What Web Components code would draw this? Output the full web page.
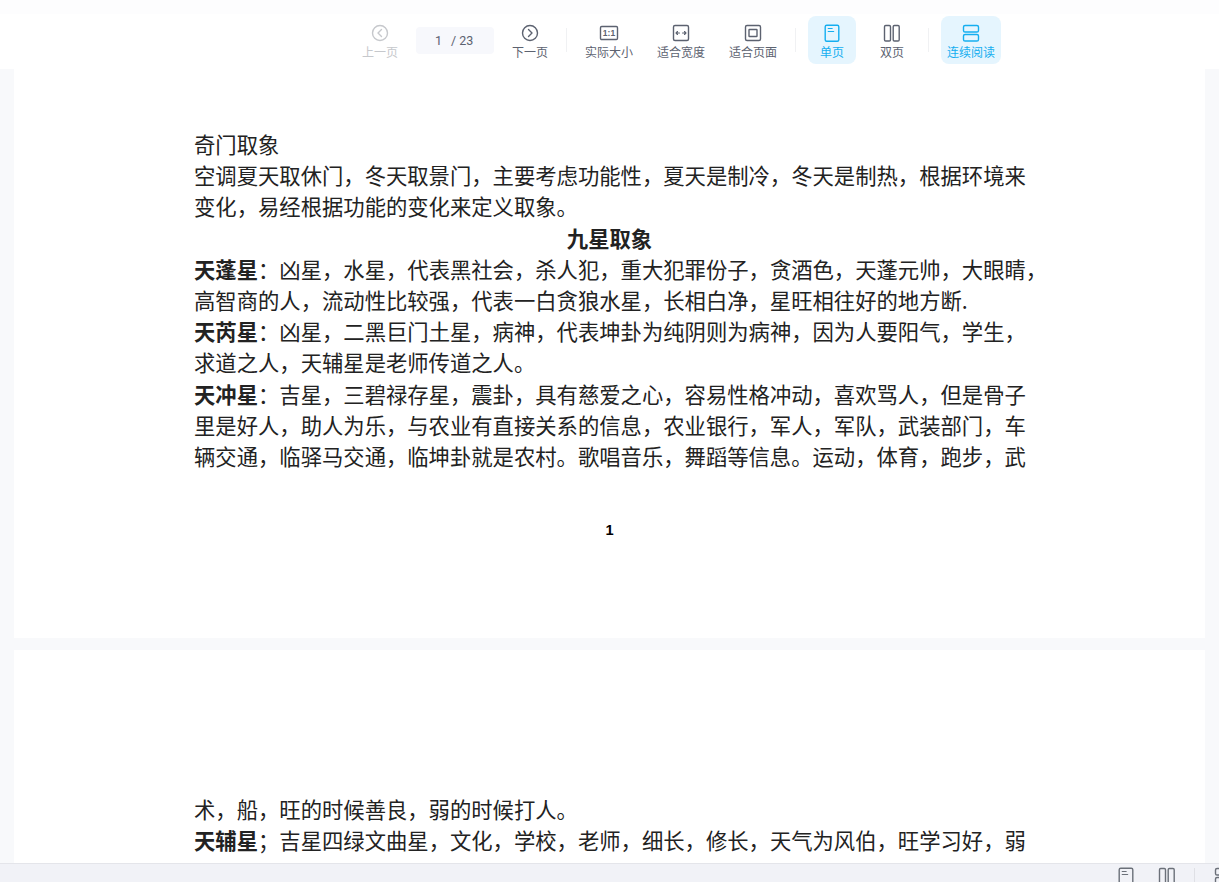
<!DOCTYPE html>
<html lang="zh">
<head>
<meta charset="utf-8">
<title>PDF</title>
<style>
  html, body { margin: 0; height: 100%; overflow: hidden; background: #f8f9fb; }
  body { font-family: "Noto Sans CJK SC", "Noto Sans", sans-serif; }
</style>
</head>
<body>
<pdf-viewer>
  <pdf-toolbar slot="toolbar" current="1" total="23"></pdf-toolbar>

  <pdf-page number="1" top="59">
    <pdf-line>奇门取象</pdf-line>
    <pdf-line>空调夏天取休门，冬天取景门，主要考虑功能性，夏天是制冷，冬天是制热，根据环境来</pdf-line>
    <pdf-line>变化，易经根据功能的变化来定义取象。</pdf-line>
    <pdf-line center><b>九星取象</b></pdf-line>
    <pdf-line><b>天蓬星</b>：凶星，水星，代表黑社会，杀人犯，重大犯罪份子，贪酒色，天蓬元帅，大眼睛，</pdf-line>
    <pdf-line>高智商的人，流动性比较强，代表一白贪狼水星，长相白净，星旺相往好的地方断.</pdf-line>
    <pdf-line><b>天芮星</b>：凶星，二黑巨门土星，病神，代表坤卦为纯阴则为病神，因为人要阳气，学生，</pdf-line>
    <pdf-line>求道之人，天辅星是老师传道之人。</pdf-line>
    <pdf-line><b>天冲星</b>：吉星，三碧禄存星，震卦，具有慈爱之心，容易性格冲动，喜欢骂人，但是骨子</pdf-line>
    <pdf-line>里是好人，助人为乐，与农业有直接关系的信息，农业银行，军人，军队，武装部门，车</pdf-line>
    <pdf-line>辆交通，临驿马交通，临坤卦就是农村。歌唱音乐，舞蹈等信息。运动，体育，跑步，武</pdf-line>
  </pdf-page>

  <pdf-page top="143">
    <pdf-line>术，船，旺的时候善良，弱的时候打人。</pdf-line>
    <pdf-line><b>天辅星</b>；吉星四绿文曲星，文化，学校，老师，细长，修长，天气为风伯，旺学习好，弱</pdf-line>
  </pdf-page>

  <pdf-statusbar slot="status"></pdf-statusbar>
</pdf-viewer>

<script>
  const ICONS = {
    prev: `<circle cx="10" cy="10" r="7.5"/><path d="M11.5 6.5 8 10l3.5 3.5"/>`,
    next: `<circle cx="10" cy="10" r="7.5"/><path d="M8.5 6.5 12 10l-3.5 3.5"/>`,
    actual: `<rect x="1.5" y="3.5" width="17" height="13" rx="1.2"/><text x="10" y="12.8" text-anchor="middle" font-size="8.5" font-weight="700" fill="currentColor" stroke="none" font-family="Liberation Sans">1:1</text>`,
    width: `<rect x="2.5" y="2.5" width="15" height="15" rx="1.5"/><path d="M5 10h3.5M5 10l1.5-1.5M5 10l1.5 1.5M15 10h-3.5M15 10l-1.5-1.5M15 10l-1.5 1.5" stroke-width="1.1"/>`,
    page: `<rect x="2.5" y="2.5" width="15" height="15" rx="1.5"/><rect x="6" y="6.5" width="8" height="7" rx=".5"/>`,
    single: `<rect x="3.2" y="2.2" width="13.6" height="16" rx="1.5"/><path d="M6.2 5.5h4M6.2 8.5h5.5" stroke-width="1.1"/>`,
    double: `<rect x="2.5" y="2.5" width="6" height="15.5" rx="1.2"/><rect x="11.2" y="2.5" width="6" height="15.5" rx="1.2"/>`,
    scroll: `<rect x="2.5" y="2.5" width="15" height="6.5" rx="1.6"/><rect x="2.5" y="11.5" width="15" height="6.5" rx="1.6"/>`
  }

  function icon (name, size = 20) {
    return `<svg width="${size}" height="${size}" viewBox="0 0 20 20" fill="none" stroke="currentColor" stroke-width="1.4" stroke-linecap="round" stroke-linejoin="round">${ICONS[name]}</svg>`
  }

  class PdfViewer extends HTMLElement {
    constructor () {
      super()
      this.shadow = this.attachShadow({ mode: 'open' })
    }

    connectedCallback () {
      this.shadow.innerHTML = /*html*/ `
        <style>
          :host {
            display: flex;
            flex-direction: column;
            height: 100vh;
            overflow: hidden;
            background: #f8f9fb;
          }
          .pages {
            flex: 1;
            min-height: 0;
            overflow: hidden;
            display: flex;
            flex-direction: column;
            gap: 12px;
            padding: 0 14px;
          }
        </style>
        <slot name="toolbar"></slot>
        <div class="pages"><slot></slot></div>
        <slot name="status"></slot>
      `
    }
  }

  class PdfToolbar extends HTMLElement {
    constructor () {
      super()
      this.shadow = this.attachShadow({ mode: 'open' })
    }

    connectedCallback () {
      const current = this.getAttribute('current')
      const total = this.getAttribute('total')
      this.shadow.innerHTML = /*html*/ `
        <style>
          :host {
            display: flex;
            flex: none;
            align-items: center;
            box-sizing: border-box;
            height: 69px;
            padding: 14px 0 0 350px;
            background: linear-gradient(#fdfdfe 14px, #fff 14px);
          }
          .pager {
            box-sizing: border-box;
            width: 78px;
            height: 27px;
            margin: -2px 6px 0;
            padding-left: 19px;
            display: flex;
            align-items: center;
            gap: 9px;
            border-radius: 4px;
            background: #f7f8fc;
            color: #5c6270;
            font-size: 12.5px;
            font-family: "Roboto", sans-serif;
          }
          .sep {
            flex: none;
            width: 1px;
            height: 24px;
            margin-top: -3px;
            background: #f0f1f3;
          }
          .s1 { margin-left: 6px; margin-right: 6px; }
          .s2 { margin-left: 6px; margin-right: 12px; }
          .s3 { margin-left: 12px; margin-right: 12px; }
          .double { margin-left: 12px; }
        </style>
        <tool-button icon="prev" disabled>上一页</tool-button>
        <div class="pager"><span>${current}</span><span>/ ${total}</span></div>
        <tool-button icon="next">下一页</tool-button>
        <span class="sep s1"></span>
        <tool-button icon="actual">实际大小</tool-button>
        <tool-button icon="width">适合宽度</tool-button>
        <tool-button icon="page">适合页面</tool-button>
        <span class="sep s2"></span>
        <tool-button icon="single" active>单页</tool-button>
        <tool-button class="double" icon="double">双页</tool-button>
        <span class="sep s3"></span>
        <tool-button icon="scroll" active narrow>连续阅读</tool-button>
      `
    }
  }

  class ToolButton extends HTMLElement {
    constructor () {
      super()
      this.shadow = this.attachShadow({ mode: 'open' })
    }

    connectedCallback () {
      this.shadow.innerHTML = /*html*/ `
        <style>
          :host {
            display: flex;
            flex: none;
            flex-direction: column;
            align-items: center;
            box-sizing: border-box;
            height: 48px;
            margin-top: -4px;
            padding: 7px 12px 0;
            border-radius: 8px;
            color: #5c6270;
            font-size: 12px;
            line-height: 16px;
          }
          :host([narrow]) { padding-left: 6px; padding-right: 6px; }
          :host([active]) { background: #e5f5fe; color: #14aef0; }
          :host([disabled]) { color: #c6c8cc; }
          svg { display: block; margin-bottom: 1px; }
        </style>
        ${icon(this.getAttribute('icon'))}
        <slot></slot>
      `
    }
  }

  class PdfPage extends HTMLElement {
    constructor () {
      super()
      this.shadow = this.attachShadow({ mode: 'open' })
    }

    connectedCallback () {
      const number = this.getAttribute('number')
      const top = this.getAttribute('top')
      this.shadow.innerHTML = /*html*/ `
        <style>
          :host {
            display: flex;
            flex: none;
            flex-direction: column;
            box-sizing: border-box;
            height: 569px;
            padding: ${top}px 180px 0 180px;
            background: #fff;
            color: #222;
            font-size: 21.33px;
          }
          .no {
            margin-top: 49px;
            text-align: center;
            font: 700 14.67px/20px "Liberation Sans", sans-serif;
            color: #000;
          }
        </style>
        <slot></slot>
        ${number ? `<div class="no">${number}</div>` : ''}
      `
    }
  }

  class PdfLine extends HTMLElement {
    constructor () {
      super()
      this.shadow = this.attachShadow({ mode: 'open' })
    }

    connectedCallback () {
      this.shadow.innerHTML = /*html*/ `
        <style>
          :host {
            display: block;
            line-height: 31.2px;
            white-space: nowrap;
          }
          :host([center]) { text-align: center; }
        </style>
        <slot></slot>
      `
    }
  }

  class PdfStatusbar extends HTMLElement {
    constructor () {
      super()
      this.shadow = this.attachShadow({ mode: 'open' })
    }

    connectedCallback () {
      this.shadow.innerHTML = /*html*/ `
        <style>
          :host {
            display: flex;
            flex: none;
            box-sizing: border-box;
            height: 19px;
            overflow: hidden;
            justify-content: flex-end;
            align-items: flex-start;
            padding: 2px 0 0;
            background: #f1f2f7;
            border-top: 1px solid #e4e5ea;
            color: #6b7079;
          }
          svg { display: block; flex: none; }
          .double { margin-left: 21px; }
          .sep { width: 1px; height: 16px; margin: 2px 18px 0 17px; background: #dfe0e5; }
          .end { margin-right: -14px; }
        </style>
        ${icon('single')}
        <span class="double">${icon('double')}</span>
        <span class="sep"></span>
        <span class="end">${icon('scroll')}</span>
      `
    }
  }

  customElements.define('pdf-viewer', PdfViewer)
  customElements.define('pdf-toolbar', PdfToolbar)
  customElements.define('tool-button', ToolButton)
  customElements.define('pdf-page', PdfPage)
  customElements.define('pdf-line', PdfLine)
  customElements.define('pdf-statusbar', PdfStatusbar)
</script>
</body>
</html>
